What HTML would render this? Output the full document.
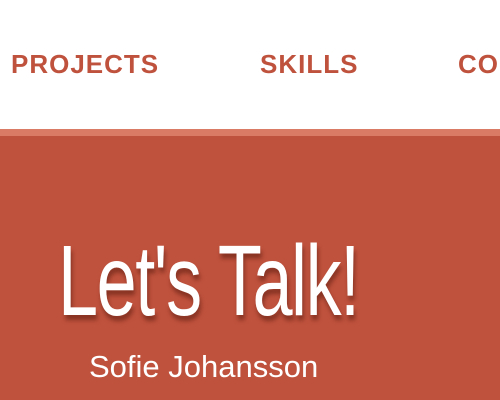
<!DOCTYPE html>
<html><head><style>
html,body{margin:0;width:500px;height:400px;overflow:hidden}
body{background:#fff;font-family:"Liberation Sans",sans-serif;position:relative}
.wrap{position:absolute;left:0;top:0;width:500px;height:400px;overflow:hidden}
.nav{position:absolute;top:49px;font-size:26px;color:#bf523d;letter-spacing:1px;font-weight:600;white-space:nowrap}
.stripe{position:absolute;top:129px;left:0;width:500px;height:7px;background:#d97b65}
.main{position:absolute;top:136px;left:0;width:500px;height:264px;background:#bf523d}
.title{position:absolute;left:58px;top:224px;font-size:100px;color:#fff;white-space:nowrap;transform:scaleX(0.72);transform-origin:left top;text-shadow:2px 5px 5px rgba(80,20,10,0.5);letter-spacing:-2px}
.name{position:absolute;left:89px;top:349px;font-size:31px;color:#fff;white-space:nowrap}
</style></head><body><div class="wrap">
<div class="nav" style="left:11px">PROJECTS</div>
<div class="nav" style="left:260px">SKILLS</div>
<div class="nav" style="left:458px">CO</div>
<div class="stripe"></div>
<div class="main"></div>
<div class="title">Let's Talk!</div>
<div class="name">Sofie Johansson</div>
</div></body></html>
